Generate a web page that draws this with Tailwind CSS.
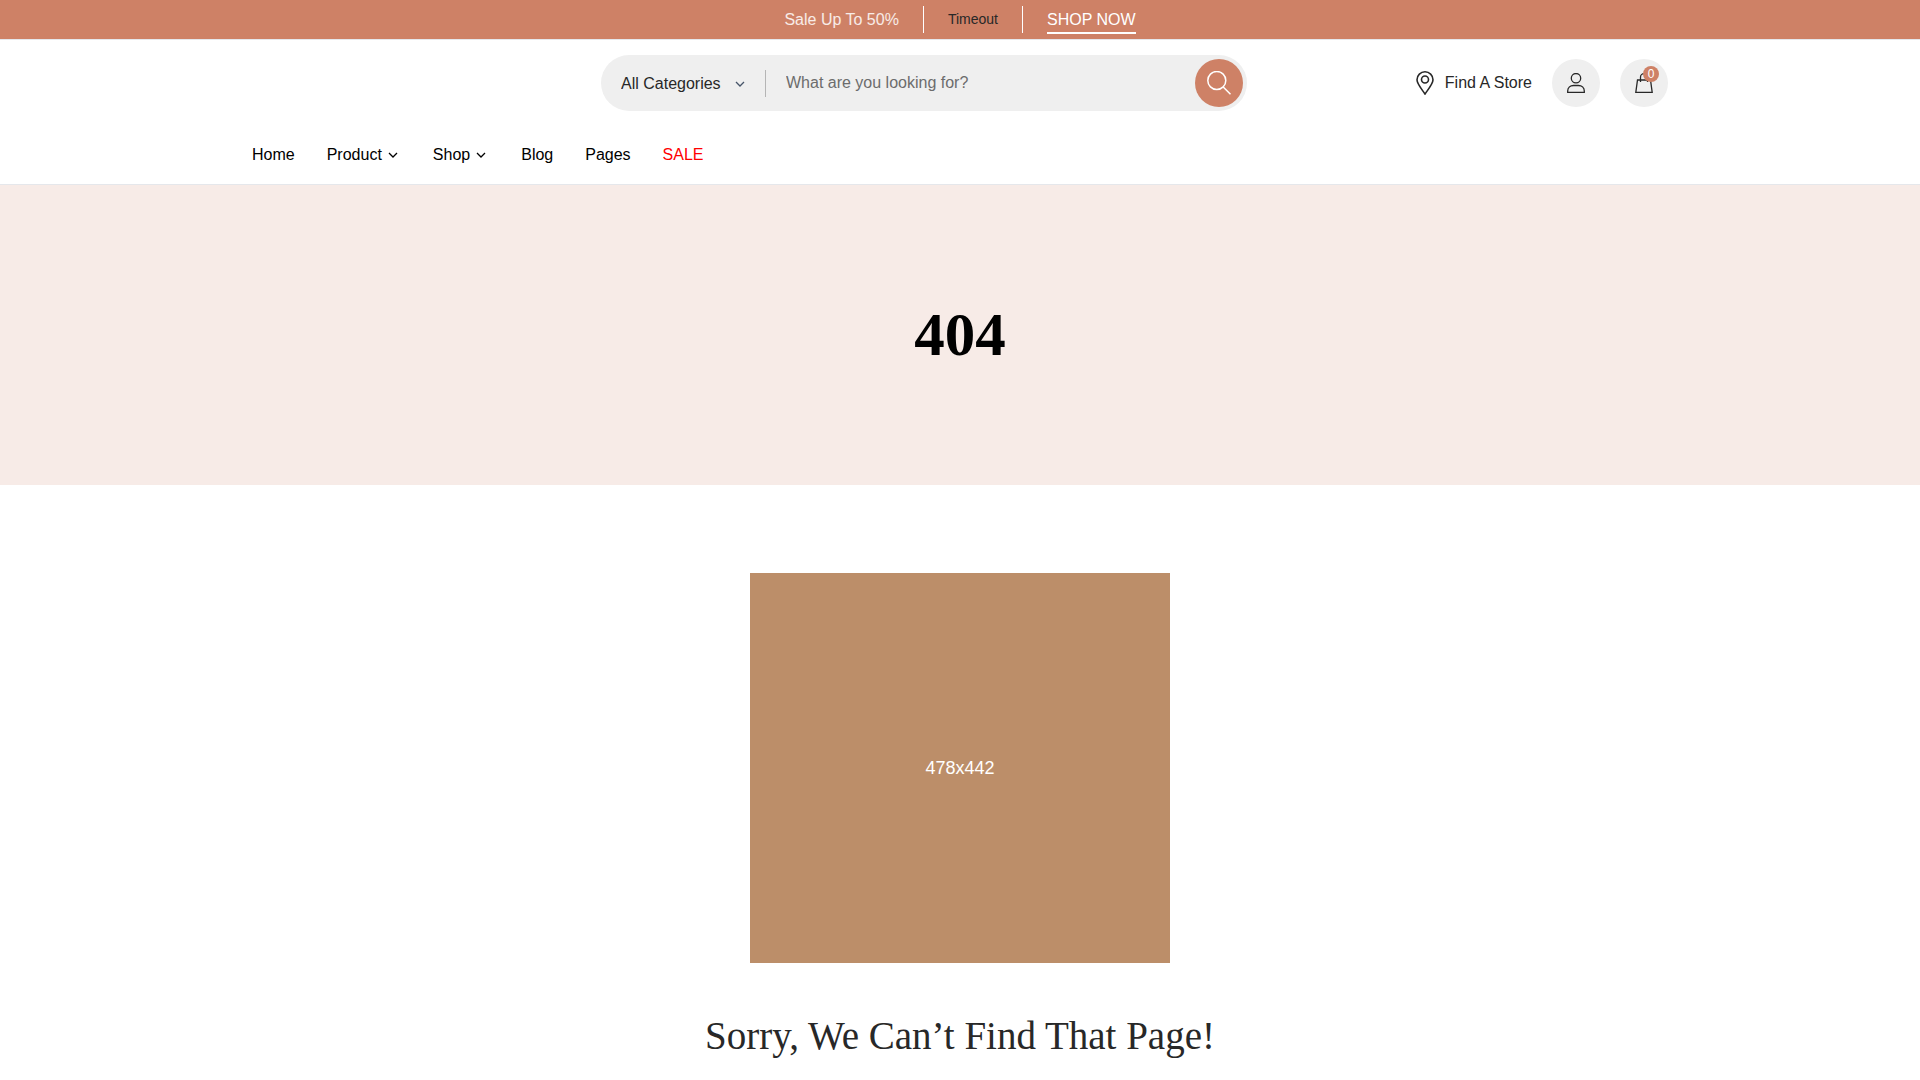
<!DOCTYPE html>
<html lang="en">
<head>
<meta charset="utf-8">
<meta name="viewport" content="width=device-width, initial-scale=1">
<title>404</title>
<script src="https://cdn.jsdelivr.net/npm/@tailwindcss/browser@4"></script>
</head>
<body class="overflow-x-hidden bg-white font-['Liberation_Sans',Arial,sans-serif] text-base text-[#282828]">

<div class="flex h-10 items-center justify-center border-b border-gray-200 bg-[#ce8166] text-white">
  <span class="px-6 text-white/85">Sale Up To 50%</span>
  <span class="h-[27px] border-x border-white px-6 text-sm leading-[27px] text-[#282828]">Timeout</span>
  <span class="px-6"><a href="#" class="block border-b-2 border-white pt-[2px] leading-6">SHOP NOW</a></span>
</div>

<header class="border-b border-gray-200 px-6">
  <div class="mx-auto max-w-[1416px]">
    <div class="grid grid-cols-[349fr_646fr_421fr] items-center pt-[15px]">
      <div></div>
      <form class="flex h-14 items-center rounded-full bg-[#efefef] pr-1 pl-5">
        <div class="relative flex w-[144px] shrink-0 items-center">
          <select aria-label="Category" class="h-7 w-full appearance-none bg-transparent pt-px outline-none">
            <option>All Categories</option>
          </select>
          <svg class="pointer-events-none absolute right-5 mt-px h-2 w-[10px]" viewBox="0 0 10 8" fill="none" stroke="#475569" stroke-width="1.3" aria-hidden="true"><path d="M1 2l4 4 4-4"/></svg>
        </div>
        <span class="h-[27px] w-px bg-[#b5b5b5]"></span>
        <input type="search" aria-label="Search" placeholder="What are you looking for?" class="h-12 min-w-0 flex-1 bg-transparent px-5 outline-none placeholder:text-[#6c6c6c]">
        <button type="submit" aria-label="Search" class="flex size-12 items-center justify-center rounded-full bg-[#ce8166] text-white">
          <svg class="size-6" viewBox="0 0 24 24" fill="none" stroke="currentColor" stroke-width="1.5" aria-hidden="true"><circle cx="9.8" cy="9.5" r="9"/><path d="M16.2 16l7.300 7.300"/></svg>
        </button>
      </form>
      <div class="flex items-center justify-end gap-5">
        <a href="#" class="flex items-center gap-[11px]">
          <svg class="h-6 w-[18px]" viewBox="0 0 18 24" fill="none" stroke="currentColor" stroke-width="1.6" aria-hidden="true"><path d="M9 23C6 18.500 1 13 1 8.800a8 8 0 0 1 16 0C17 13 12 18.500 9 23z"/><circle cx="9" cy="8.500" r="3.500"/></svg>
          Find A Store
        </a>
        <a href="#" aria-label="Account" class="flex size-12 items-center justify-center rounded-full bg-[#efefef]">
          <svg class="h-5 w-[18px]" viewBox="0 0 18 20" fill="none" stroke="currentColor" stroke-width="1.3" aria-hidden="true"><circle cx="9" cy="5.200" r="4.700"/><path d="M.7 19.300v-1.300c0-3.300 2.600-5.500 5.800-5.500h5c3.200 0 5.800 2.200 5.800 5.500v1.300z"/></svg>
        </a>
        <a href="#" aria-label="Cart" class="relative flex size-12 items-center justify-center rounded-full bg-[#efefef]">
          <svg class="h-5 w-[18px]" viewBox="0 0 18 20" fill="none" stroke="currentColor" stroke-width="1.3" aria-hidden="true"><path d="M2.500 7h13l1.700 12.300H.8zM5.500 9V4.200a3.500 3.500 0 0 1 7 0V9"/></svg>
          <span class="absolute top-[7px] right-[9px] size-4 rounded-full bg-[#ce8166] text-center text-xs leading-4 text-white">0</span>
        </a>
      </div>
    </div>
    <nav class="flex items-center gap-8 pt-8 pb-[17px] text-black">
      <a href="#">Home</a>
      <a href="#" class="flex items-center gap-1.5 pr-[3px]">Product <svg class="h-2 w-[10px]" viewBox="0 0 10 8" fill="none" stroke="currentColor" stroke-width="1.3" aria-hidden="true"><path d="M1 2l4 4 4-4"/></svg></a>
      <a href="#" class="flex items-center gap-1.5 pr-[3px]">Shop <svg class="h-2 w-[10px]" viewBox="0 0 10 8" fill="none" stroke="currentColor" stroke-width="1.3" aria-hidden="true"><path d="M1 2l4 4 4-4"/></svg></a>
      <a href="#">Blog</a>
      <a href="#">Pages</a>
      <a href="#" class="w-10 overflow-hidden text-[#f00]">SALE</a>
    </nav>
  </div>
</header>

<section class="bg-[#f7ebe7] py-[120px] text-center">
  <h1 class="font-['Liberation_Serif',serif] text-[61px] leading-[60px] font-bold text-black">404</h1>
</section>

<main class="flex flex-col items-center px-6 pt-[88px] pb-4">
  <div role="img" aria-label="478x442" class="flex h-[390px] w-full max-w-[420px] items-center justify-center bg-[#bc8e69] text-lg text-white">478x442</div>
  <h2 class="mt-12 text-center font-['Liberation_Serif',serif] text-[39px] leading-[50px]">Sorry, We Can’t Find That Page!</h2>
</main>
</body>
</html>
